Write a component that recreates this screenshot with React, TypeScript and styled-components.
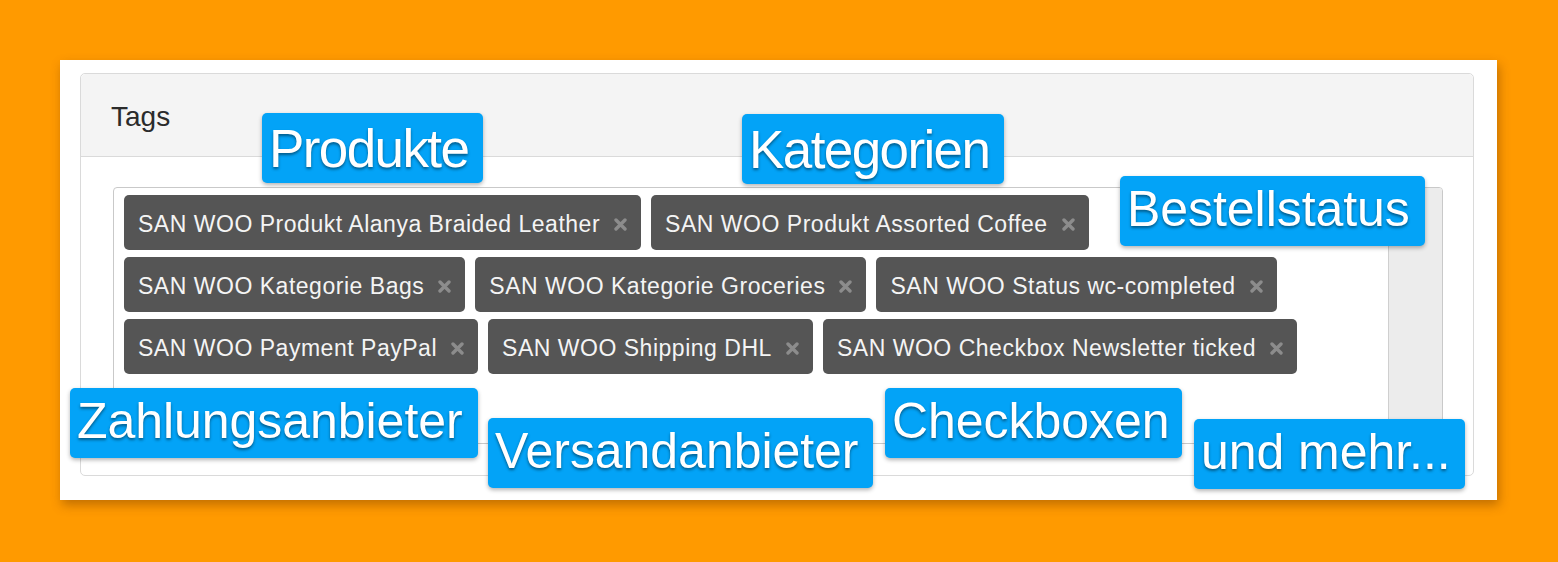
import React from 'react';
import styled, { createGlobalStyle } from 'styled-components';

const GlobalStyle = createGlobalStyle`
  html, body {
    margin: 0;
    padding: 0;
  }
  body {
    background: #ff9a00;
    font-family: 'Liberation Sans', Arial, Helvetica, sans-serif;
    width: 1558px;
    height: 562px;
    overflow: hidden;
  }
`;

const Page = styled.div`
  padding: 60px 0 0 60px;
`;

const Panel = styled.div`
  position: relative;
  width: 1437px;
  box-sizing: border-box;
  padding: 13px 23px 24px 20px;
  background: #fff;
  box-shadow: 2px 5px 10px rgba(120, 60, 0, 0.45);
`;

const Card = styled.div`
  border: 1px solid #dadada;
  border-radius: 5px;
  background: #fff;
`;

const CardHeader = styled.div`
  padding: 27px 30px 24px;
  background: #f4f4f4;
  border-bottom: 1px solid #dadada;
  border-radius: 5px 5px 0 0;
  font-size: 28px;
  line-height: 31px;
  color: #2b2b2b;
`;

const CardBody = styled.div`
  padding: 30px 30px 31px 32px;
`;

const TagBox = styled.div`
  display: flex;
  height: 257px;
  box-sizing: border-box;
  border: 1px solid #c9c9c9;
  border-radius: 4px;
  overflow: hidden;
`;

const TagList = styled.div`
  flex: 1;
  display: flex;
  flex-wrap: wrap;
  align-content: flex-start;
  gap: 7px 10px;
  padding: 7px 0 0 10px;
`;

const ScrollStrip = styled.div`
  width: 53px;
  background: #ececec;
  border-left: 1px solid #cfcfcf;
`;

const Tag = styled.div`
  display: flex;
  align-items: center;
  height: 55px;
  box-sizing: border-box;
  padding: 3px 14px 0;
  gap: 14px;
  background: #555;
  border-radius: 5px;
  color: #f4f4f4;
  font-size: 23px;
  letter-spacing: 0.52px;
  white-space: nowrap;
`;

const Remove = styled.svg`
  width: 13px;
  height: 13px;
  margin-top: 1px;
  flex: none;
`;

const Callout = styled.div<{ $x: number; $y: number; $w: number; $big?: boolean }>`
  position: absolute;
  left: ${(p) => p.$x}px;
  top: ${(p) => p.$y}px;
  width: ${(p) => p.$w}px;
  height: 70px;
  box-sizing: border-box;
  padding: ${(p) => (p.$big ? '9px' : '8px')} 0 0 7px;
  background: #03a3f7;
  border-radius: 5px;
  box-shadow: 0 2px 4px rgba(0, 0, 0, 0.3);
  color: #fff;
  font-size: ${(p) => (p.$big ? 53 : 50)}px;
  line-height: ${(p) => (p.$big ? 53 : 50)}px;
  letter-spacing: ${(p) => (p.$big ? -1.6 : -0.05)}px;
  white-space: nowrap;
  text-shadow: 0 2px 3px rgba(0, 0, 0, 0.45);
`;

const tags = [
  'SAN WOO Produkt Alanya Braided Leather',
  'SAN WOO Produkt Assorted Coffee',
  'SAN WOO Kategorie Bags',
  'SAN WOO Kategorie Groceries',
  'SAN WOO Status wc-completed',
  'SAN WOO Payment PayPal',
  'SAN WOO Shipping DHL',
  'SAN WOO Checkbox Newsletter ticked',
];

const callouts = [
  { text: 'Produkte', x: 202, y: 53, w: 221, big: true },
  { text: 'Kategorien', x: 682, y: 54, w: 262, big: true },
  { text: 'Bestellstatus', x: 1060, y: 116, w: 305 },
  { text: 'Zahlungsanbieter', x: 10, y: 328, w: 408 },
  { text: 'Versandanbieter', x: 428, y: 358, w: 385 },
  { text: 'Checkboxen', x: 825, y: 328, w: 297 },
  { text: 'und mehr...', x: 1134, y: 359, w: 271 },
];

function RemoveIcon() {
  return (
    <Remove viewBox="0 0 13 13">
      <path d="M2 2 L11 11 M11 2 L2 11" stroke="#8c8c8c" strokeWidth="3.4" strokeLinecap="round" />
    </Remove>
  );
}

export default function App() {
  return (
    <Page>
      <GlobalStyle />
      <Panel>
        <Card>
          <CardHeader>Tags</CardHeader>
          <CardBody>
            <TagBox>
              <TagList>
                {tags.map((t) => (
                  <Tag key={t}>
                    {t}
                    <RemoveIcon />
                  </Tag>
                ))}
              </TagList>
              <ScrollStrip />
            </TagBox>
          </CardBody>
        </Card>
        {callouts.map((c) => (
          <Callout key={c.text} $x={c.x} $y={c.y} $w={c.w} $big={c.big}>
            {c.text}
          </Callout>
        ))}
      </Panel>
    </Page>
  );
}
